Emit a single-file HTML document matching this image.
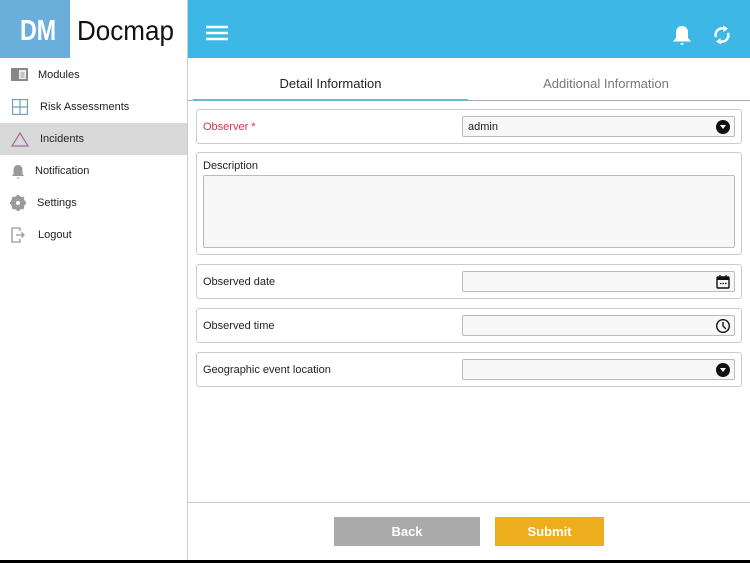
<!DOCTYPE html>
<html><head><style>
*{margin:0;padding:0;box-sizing:border-box}
body{width:750px;height:563px;position:relative;overflow:hidden;background:#fff;font-family:"Liberation Sans",sans-serif;font-size:11px;color:#222}
.abs{position:absolute}
.side{left:0;top:0;width:188px;height:560px;border-right:1px solid #ccc;background:#fff}
.logo{left:0;top:0;width:70px;height:58px;background:#6aafdc}
.logo b{position:absolute;left:20px;top:0;color:#fff;font-size:29px;line-height:62px;transform:scaleX(.8);transform-origin:0 0;letter-spacing:0}
.logot{left:77px;top:0;line-height:62px;font-size:28px;color:#111;transform:scaleX(.93);transform-origin:0 0}
.item{left:0;width:187px;height:32px;line-height:32px}
.item span{position:absolute;left:38px}
.hdr{left:188px;top:0;width:562px;height:58px;background:#3db8e6}
.card{left:196px;width:546px;border:1px solid #ccc;border-radius:3px;background:#fff}
.lbl{position:absolute;left:6px}
.inp{position:absolute;left:265px;width:273px;height:21px;border:1px solid #bbb;background:#f7f7f7;border-radius:2px}
.dd{position:absolute;right:4px;top:3px;width:14px;height:14px;border-radius:50%;background:#111}
.dd:after{content:"";position:absolute;left:4px;top:5px;border-left:3px solid transparent;border-right:3px solid transparent;border-top:4px solid #fff}
.btn{top:517px;height:29px;line-height:29px;color:#fff;font-weight:bold;font-size:13px;text-align:center}
</style></head><body>
<div class="abs side"></div>
<div class="abs logo"><b>DM</b></div>
<div class="abs logot">Docmap</div>
<div class="abs item" style="top:59px"><svg class="abs" style="left:11px;top:9px" width="17" height="13"><rect x="0" y="0" width="17" height="13" fill="#888"/><rect x="8" y="2" width="7" height="9" fill="#eee"/><path d="M9.5 5h4M9.5 7h4M9.5 9h4" stroke="#999"/></svg><span>Modules</span></div>
<div class="abs item" style="top:91px"><svg class="abs" style="left:12px;top:8px" width="16" height="16"><path d="M.5 .5h15v15H.5zM8 .5v15M.5 8h15" fill="none" stroke="#6a9ec9" stroke-width="1.2"/></svg><span style="left:40px">Risk Assessments</span></div>
<div class="abs item" style="top:123px;background:#d9d9d9"><svg class="abs" style="left:11px;top:9px" width="18" height="15"><path d="M9 1L17 14H1z" fill="none" stroke="#a36aa8" stroke-width="1.2"/></svg><span style="left:40px">Incidents</span></div>
<div class="abs item" style="top:155px"><svg class="abs" style="left:11px;top:9px" width="14" height="16"><path d="M7 1c3 0 4.5 2.5 4.5 5v4l1.5 2H1l1.5-2V6C2.5 3.5 4 1 7 1zM5.5 13.5h3l-1.5 1.5z" fill="#999"/></svg><span style="left:35px">Notification</span></div>
<div class="abs item" style="top:187px"><svg class="abs" style="left:10px;top:8px" width="16" height="16"><circle cx="8" cy="8" r="5.5" fill="none" stroke="#999" stroke-width="3"/><path d="M8 0v16M0 8h16M2.3 2.3l11.4 11.4M13.7 2.3L2.3 13.7" stroke="#999" stroke-width="2.5"/><circle cx="8" cy="8" r="2" fill="#fff"/></svg><span style="left:37px">Settings</span></div>
<div class="abs item" style="top:219px"><svg class="abs" style="left:11px;top:8px" width="16" height="16"><path d="M9 4V1H1v14h8v-3" fill="none" stroke="#999" stroke-width="1.3"/><path d="M5 8h8M10.5 5.5L13 8l-2.5 2.5" fill="none" stroke="#999" stroke-width="1.3"/></svg><span>Logout</span></div>

<div class="abs hdr"></div>
<svg class="abs" style="left:206px;top:25px" width="22" height="16"><path d="M0 2h22M0 8h22M0 14h22" stroke="#fff" stroke-width="2.6"/></svg>
<svg class="abs" style="left:672px;top:25px" width="20" height="22"><path d="M10 1c4 0 6 3 6 6.5V13l3 3.5H1L4 13V7.5C4 4 6 1 10 1zM8 18h4l-2 2.5z" fill="#fff"/></svg>
<svg class="abs" style="left:711px;top:24px" width="22" height="22"><path d="M5 13A6.5 6.5 0 0 1 14 5M17 9A6.5 6.5 0 0 1 8 17" fill="none" stroke="#fff" stroke-width="2.5"/><path d="M12 1.5l5 3-4.5 3.5zM10 20.5l-5-3 4.5-3.5z" fill="#fff"/></svg>

<div class="abs" style="left:188px;top:100px;width:562px;height:1px;background:#aaa"></div>
<div class="abs" style="left:193px;top:99px;width:275px;height:2px;background:#6ab6d8"></div>
<div class="abs" style="left:193px;top:76px;width:275px;text-align:center;font-size:13px;color:#222">Detail Information</div>
<div class="abs" style="left:468px;top:76px;width:276px;text-align:center;font-size:13px;color:#777">Additional Information</div>

<div class="abs card" style="top:109px;height:35px"><div class="lbl" style="top:11px;color:#c9384c">Observer *</div><div class="inp" style="top:6px"><span style="position:absolute;left:5px;top:4px">admin</span><div class="dd"></div></div></div>
<div class="abs card" style="top:152px;height:103px"><div class="lbl" style="top:7px">Description</div><div class="abs" style="left:6px;top:22px;width:532px;height:73px;border:1px solid #bbb;background:#f7f7f7;border-radius:2px"></div></div>
<div class="abs card" style="top:264px;height:35px"><div class="lbl" style="top:11px">Observed date</div><div class="inp" style="top:6px"><svg class="abs" style="right:4px;top:3px" width="14" height="14"><rect x="1" y="2" width="12" height="11" rx="1" fill="none" stroke="#111" stroke-width="1.4"/><rect x="1" y="2" width="12" height="3" fill="#111"/><path d="M4 0v3M10 0v3M4 8.5h1.5M6.5 8.5h1.5M9 8.5h1.5" stroke="#111" stroke-width="1.2"/></svg></div></div>
<div class="abs card" style="top:308px;height:35px"><div class="lbl" style="top:11px">Observed time</div><div class="inp" style="top:6px"><svg class="abs" style="right:3px;top:2px" width="16" height="16"><circle cx="8" cy="8" r="6.3" fill="none" stroke="#111" stroke-width="1.4"/><path d="M8 4v4l3 3" fill="none" stroke="#111" stroke-width="1.4"/></svg></div></div>
<div class="abs card" style="top:352px;height:35px"><div class="lbl" style="top:11px">Geographic event location</div><div class="inp" style="top:6px"><div class="dd"></div></div></div>

<div class="abs" style="left:188px;top:502px;width:562px;height:1px;background:#ccc"></div>
<div class="abs btn" style="left:334px;width:146px;background:#aaa">Back</div>
<div class="abs btn" style="left:495px;width:109px;background:#ecae1d">Submit</div>
<div class="abs" style="left:0;top:560px;width:750px;height:3px;background:#000"></div>
</body></html>
